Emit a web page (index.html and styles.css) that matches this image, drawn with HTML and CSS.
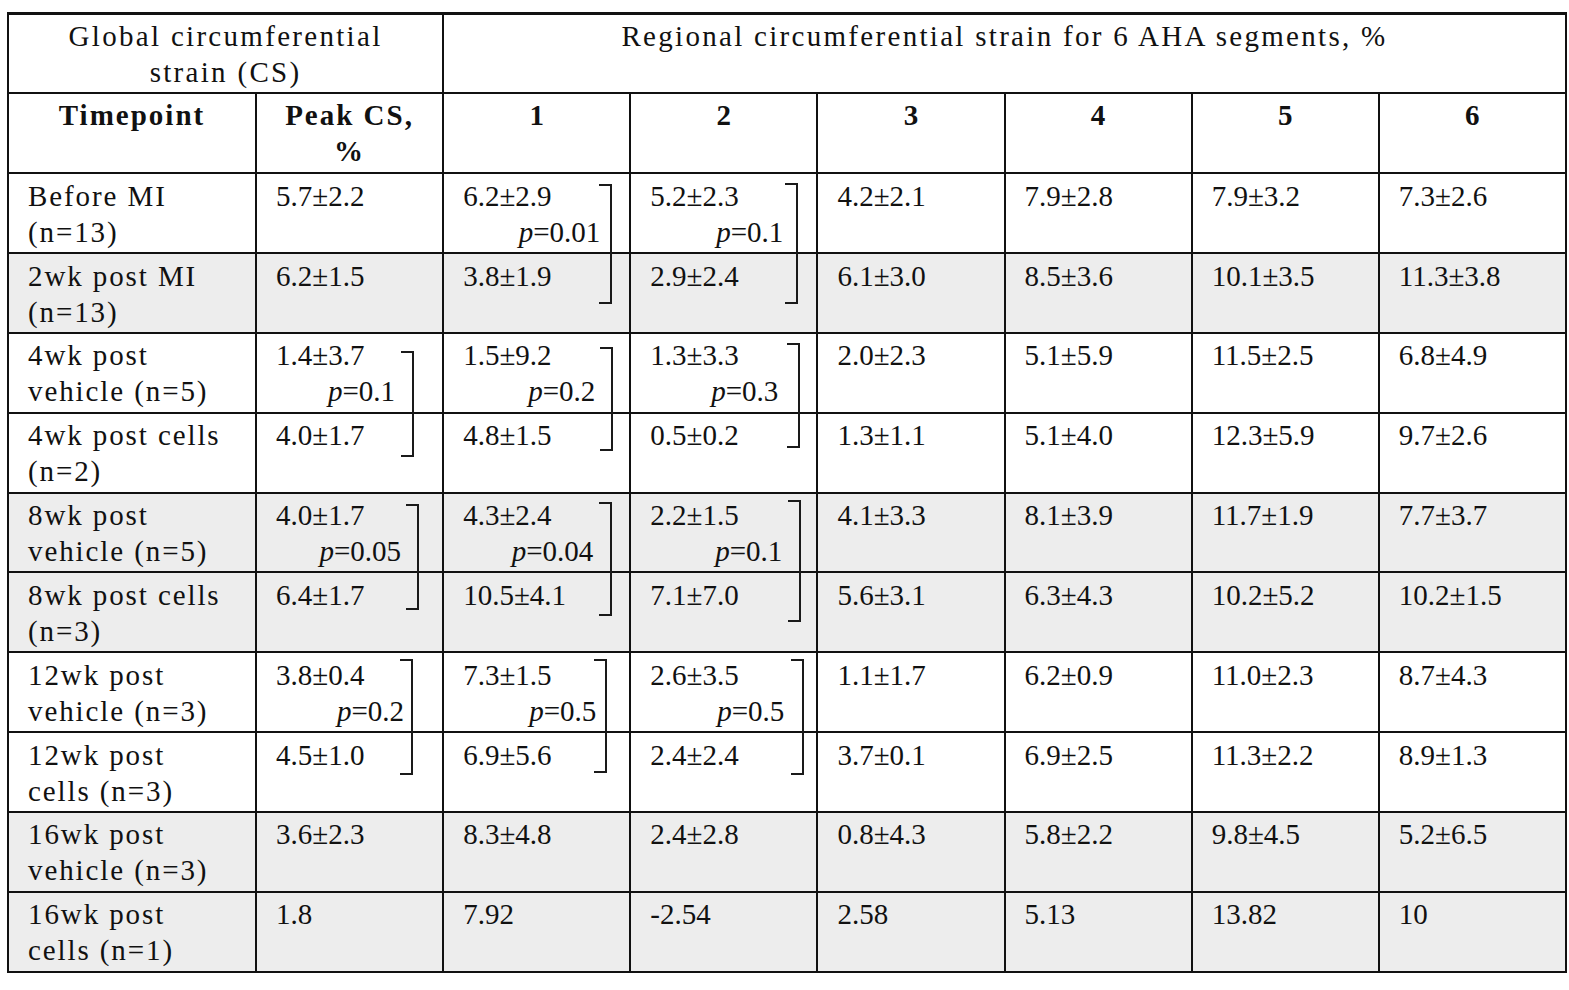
FILE: index.html
```html
<!DOCTYPE html>
<html>
<head>
<meta charset="utf-8">
<link rel="stylesheet" href="styles.css">
</head>
<body>
<table class="strain">
  <colgroup>
    <col class="c-time"><col class="c-val"><col class="c-val"><col class="c-val"><col class="c-val"><col class="c-val"><col class="c-val"><col class="c-val">
  </colgroup>
  <thead>
    <tr class="hrow">
      <th colspan="2" class="grp">Global circumferential<br>strain (CS)</th>
      <th colspan="6" class="grp">Regional circumferential strain for 6 AHA segments, %</th>
    </tr>
    <tr class="hrow">
      <th class="bold wide">Timepoint</th>
      <th class="bold wide">Peak CS,<br>%</th>
      <th class="bold">1</th>
      <th class="bold">2</th>
      <th class="bold">3</th>
      <th class="bold">4</th>
      <th class="bold">5</th>
      <th class="bold">6</th>
    </tr>
  </thead>
  <tbody>
    <tr>
      <td class="lbl">Before MI<br>(n=13)</td>
      <td>5.7±2.2</td>
      <td>6.2±2.9<div class="pv m29"><i>p</i>=0.01</div><span class="br b1"></span></td>
      <td>5.2±2.3<div class="pv m33"><i>p</i>=0.1</div><span class="br b2"></span></td>
      <td>4.2±2.1</td>
      <td>7.9±2.8</td>
      <td>7.9±3.2</td>
      <td>7.3±2.6</td>
    </tr>
    <tr class="shade">
      <td class="lbl">2wk post MI<br>(n=13)</td>
      <td>6.2±1.5</td>
      <td>3.8±1.9</td>
      <td>2.9±2.4</td>
      <td>6.1±3.0</td>
      <td>8.5±3.6</td>
      <td>10.1±3.5</td>
      <td>11.3±3.8</td>
    </tr>
    <tr>
      <td class="lbl">4wk post<br>vehicle (n=5)</td>
      <td>1.4±3.7<div class="pv m47"><i>p</i>=0.1</div><span class="br b3"></span></td>
      <td>1.5±9.2<div class="pv m34"><i>p</i>=0.2</div><span class="br b4"></span></td>
      <td>1.3±3.3<div class="pv m38"><i>p</i>=0.3</div><span class="br b5"></span></td>
      <td>2.0±2.3</td>
      <td>5.1±5.9</td>
      <td>11.5±2.5</td>
      <td>6.8±4.9</td>
    </tr>
    <tr>
      <td class="lbl">4wk post cells<br>(n=2)</td>
      <td>4.0±1.7</td>
      <td>4.8±1.5</td>
      <td>0.5±0.2</td>
      <td>1.3±1.1</td>
      <td>5.1±4.0</td>
      <td>12.3±5.9</td>
      <td>9.7±2.6</td>
    </tr>
    <tr class="shade">
      <td class="lbl">8wk post<br>vehicle (n=5)</td>
      <td>4.0±1.7<div class="pv m41"><i>p</i>=0.05</div><span class="br b6"></span></td>
      <td>4.3±2.4<div class="pv m36"><i>p</i>=0.04</div><span class="br b7"></span></td>
      <td>2.2±1.5<div class="pv m34"><i>p</i>=0.1</div><span class="br b8"></span></td>
      <td>4.1±3.3</td>
      <td>8.1±3.9</td>
      <td>11.7±1.9</td>
      <td>7.7±3.7</td>
    </tr>
    <tr class="shade">
      <td class="lbl">8wk post cells<br>(n=3)</td>
      <td>6.4±1.7</td>
      <td>10.5±4.1</td>
      <td>7.1±7.0</td>
      <td>5.6±3.1</td>
      <td>6.3±4.3</td>
      <td>10.2±5.2</td>
      <td>10.2±1.5</td>
    </tr>
    <tr>
      <td class="lbl">12wk post<br>vehicle (n=3)</td>
      <td>3.8±0.4<div class="pv m38"><i>p</i>=0.2</div><span class="br b9"></span></td>
      <td>7.3±1.5<div class="pv m33"><i>p</i>=0.5</div><span class="br b10"></span></td>
      <td>2.6±3.5<div class="pv m32"><i>p</i>=0.5</div><span class="br b11"></span></td>
      <td>1.1±1.7</td>
      <td>6.2±0.9</td>
      <td>11.0±2.3</td>
      <td>8.7±4.3</td>
    </tr>
    <tr>
      <td class="lbl">12wk post<br>cells (n=3)</td>
      <td>4.5±1.0</td>
      <td>6.9±5.6</td>
      <td>2.4±2.4</td>
      <td>3.7±0.1</td>
      <td>6.9±2.5</td>
      <td>11.3±2.2</td>
      <td>8.9±1.3</td>
    </tr>
    <tr class="shade">
      <td class="lbl">16wk post<br>vehicle (n=3)</td>
      <td>3.6±2.3</td>
      <td>8.3±4.8</td>
      <td>2.4±2.8</td>
      <td>0.8±4.3</td>
      <td>5.8±2.2</td>
      <td>9.8±4.5</td>
      <td>5.2±6.5</td>
    </tr>
    <tr class="shade">
      <td class="lbl">16wk post<br>cells (n=1)</td>
      <td>1.8</td>
      <td>7.92</td>
      <td>-2.54</td>
      <td>2.58</td>
      <td>5.13</td>
      <td>13.82</td>
      <td>10</td>
    </tr>
  </tbody>
</table>
</body>
</html>
```
FILE: styles.css
```css
html, body {
  margin: 0;
  padding: 0;
  background: #ffffff;
}

body {
  padding: 12px 0 0 7px;
  font-family: "Liberation Serif", "Times New Roman", serif;
  color: #111111;
}

.strain {
  border-collapse: collapse;
  table-layout: fixed;
  width: 1558px;
  font-size: 29px;
  line-height: 36px;
}

.c-time { width: 248px; }
.c-val { width: 187.14px; }

.strain tr {
  height: 79.85px;
}

.strain th,
.strain td {
  border: 2px solid #111111;
  vertical-align: top;
  padding: 3.5px 0 0 19px;
  white-space: nowrap;
  text-align: left;
  font-weight: normal;
}

.strain td {
  position: relative;
}

.strain thead tr:first-child th {
  border-top-width: 3px;
}

.strain th {
  text-align: center;
  padding-left: 0;
  padding-top: 2.5px;
}

.strain th.grp {
  letter-spacing: 2.3px;
}

.strain th.bold {
  font-weight: bold;
}

.strain th.wide {
  letter-spacing: 2px;
}

.lbl {
  letter-spacing: 1.9px;
}

.shade td {
  background: #ededed;
}

.pv {
  text-align: right;
}

.pv i {
  font-style: italic;
}

.m29 { margin-right: 29px; }
.m32 { margin-right: 32px; }
.m33 { margin-right: 33px; }
.m34 { margin-right: 34px; }
.m36 { margin-right: 36px; }
.m38 { margin-right: 38px; }
.m41 { margin-right: 41px; }
.m47 { margin-right: 47px; }

/* brackets joining paired rows */
.br {
  position: absolute;
  z-index: 2;
  width: 11px;
  border: 2px solid #1a1a1a;
  border-left: none;
}

.b1 { left: 155px; top: 10px; height: 116px; }
.b2 { left: 154px; top: 9px; height: 117px; }
.b3 { left: 144px; top: 17px; height: 102px; }
.b4 { left: 156px; top: 13px; height: 100px; }
.b5 { left: 156px; top: 9px; height: 101px; }
.b6 { left: 149px; top: 10px; height: 102px; }
.b7 { left: 155px; top: 8px; height: 110px; }
.b8 { left: 157px; top: 6px; height: 118px; }
.b9 { left: 143px; top: 6px; height: 112px; }
.b10 { left: 150px; top: 6px; height: 110px; }
.b11 { left: 160px; top: 6px; height: 112px; }
```
